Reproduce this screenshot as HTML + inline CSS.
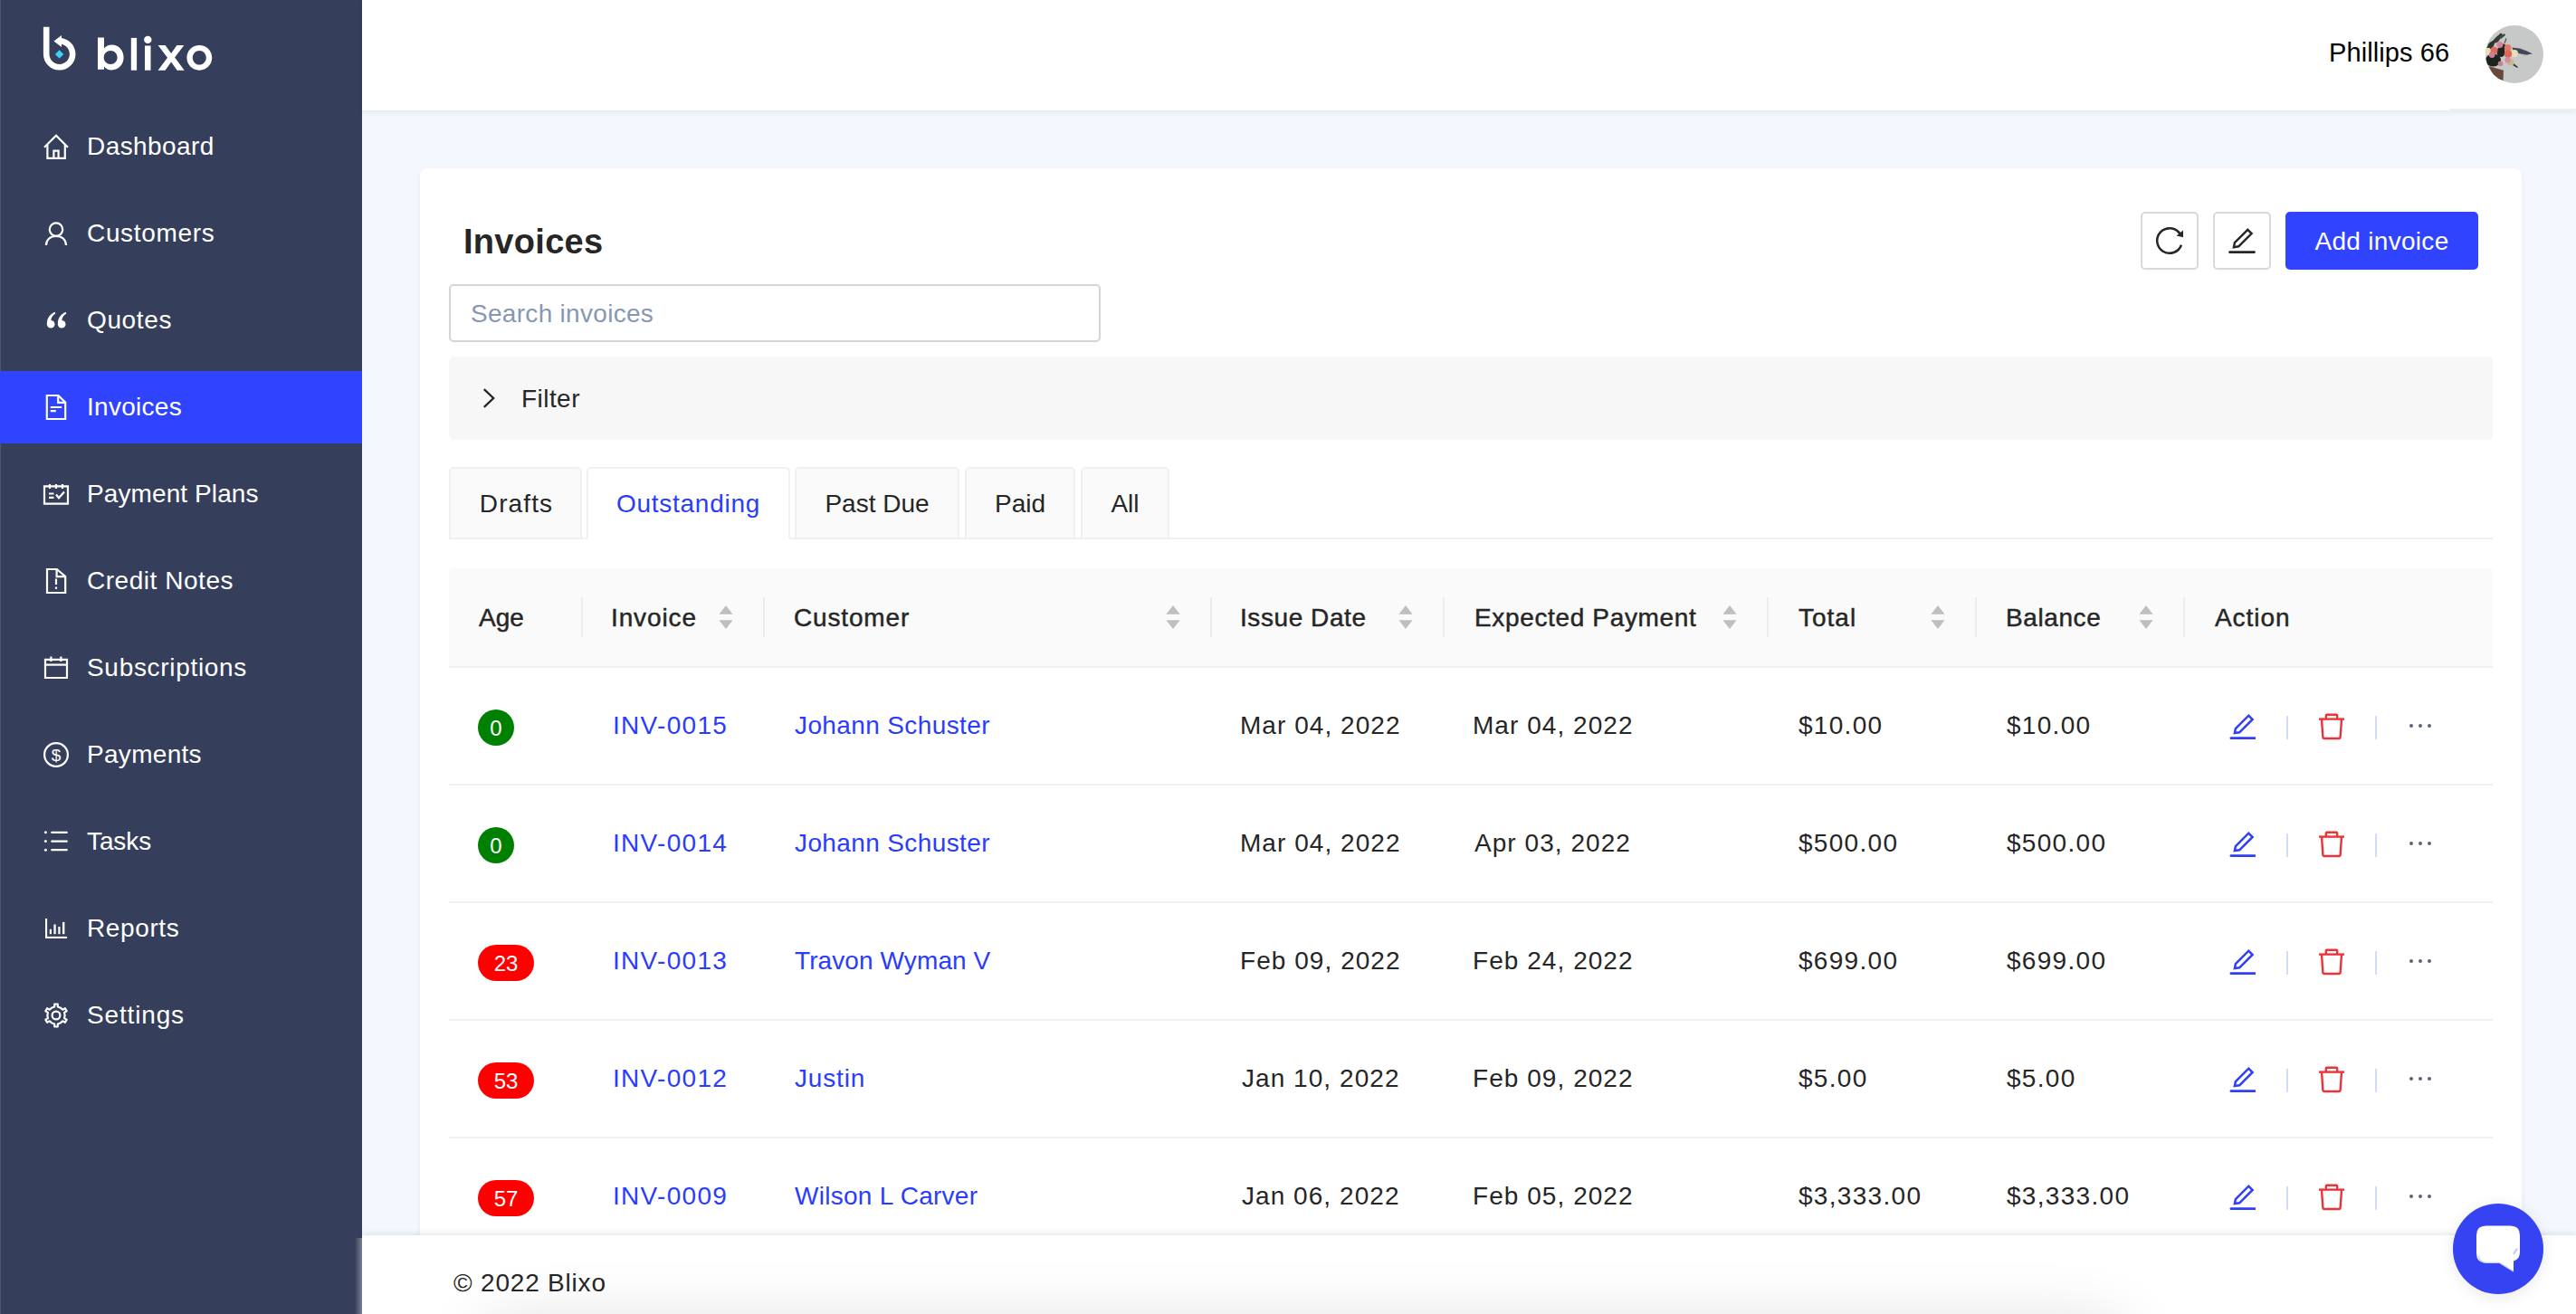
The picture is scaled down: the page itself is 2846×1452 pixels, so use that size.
<!DOCTYPE html>
<html><head><meta charset="utf-8">
<style>
*{box-sizing:border-box;margin:0;padding:0}
html,body{width:2846px;height:1452px;overflow:hidden}
body{background:#f4f7fe;font-family:"Liberation Sans",sans-serif;color:#262626;position:relative}
.abs{position:absolute}
#sb{left:0;top:0;width:400px;height:1452px;background:#353f5c}
#sb .edge{left:0;top:0;width:1px;height:1452px;background:#4d5773}
.nav{position:absolute;left:0;width:400px;height:80px;color:#fff;font-size:28px}
.nav.active{background:#3044ff}
.nav svg{position:absolute;left:48px;top:26px;width:28px;height:28px;overflow:visible}
.nav span{position:absolute;left:96px;letter-spacing:0.42px;top:0;line-height:80px;white-space:nowrap}
#hdr{left:400px;top:0;width:2446px;height:122px;background:#fff;box-shadow:0 2px 6px rgba(0,0,0,.07)}
#card{left:464px;top:186px;width:2322px;height:1300px;background:#fff;border-radius:8px;box-shadow:0 3px 6px rgba(30,40,90,.06)}
.t{position:absolute;white-space:nowrap;font-size:28px;line-height:1}

.btn{position:absolute;top:234px;height:64px;border:2px solid #d9d9d9;border-radius:5px;background:#fff;box-shadow:0 2px 0 rgba(0,0,0,.016)}
.btn svg{position:absolute;left:50%;top:50%;transform:translate(-50%,-50%)}
#add{left:2525px;width:213px;letter-spacing:0.3px;background:#3044ff;border-color:#3044ff;color:#fff;font-size:28px;text-align:center;line-height:62px}
#search{left:496px;top:314px;width:720px;height:64px;border:2px solid #d5d5d5;border-radius:5px;background:#fff}
#search span{position:absolute;left:22px;top:1px;line-height:59px;font-size:28px;color:#8797b3;white-space:nowrap;letter-spacing:0.3px}
#filter{left:496px;top:394px;width:2258px;height:92px;background:#f7f7f7;border-radius:5px}
.tab{position:absolute;top:516px;height:80px;background:#fafafa;border:2px solid #f0f0f0;border-radius:5px 5px 0 0;font-size:28px;text-align:center;line-height:78px;color:#262626}
.tab.on{background:#fff;border-bottom-color:#fff;color:#2a3cfd}
#tabline{left:496px;top:594px;width:2258px;height:2px;background:#f0f0f0}
#thead{left:496px;top:628px;width:2258px;height:110px;background:#fafafa;border-bottom:2px solid #f0f0f0;border-radius:5px 5px 0 0}
.th{position:absolute;top:0;line-height:110px;font-size:28px;font-weight:normal;color:#262626;white-space:nowrap;-webkit-text-stroke:0.45px #262626}
.sep{position:absolute;top:32px;width:2px;height:44px;background:#ececec}
.sort{position:absolute;top:41px;width:16px;height:26px}
.row{position:absolute;left:496px;width:2258px;height:130px;border-bottom:2px solid #f0f0f0;background:#fff}
.td{position:absolute;top:0px;line-height:128px;font-size:28px;white-space:nowrap;color:#262626}
.lnk{color:#2a3cfd}
.badge{position:absolute;top:46px;height:40px;border-radius:20px;color:#fff;font-size:24px;line-height:42px;text-align:center}
.vsep{position:absolute;top:53px;width:2px;height:26px;background:#d3dcf3}
#footer{left:400px;top:1365px;width:2446px;height:87px;background:#fff;box-shadow:0 -2px 6px rgba(0,0,0,.09);overflow:hidden}
#fshadow{left:140px;top:105px;width:1800px;height:60px;border-radius:30px;box-shadow:0 0 70px 10px rgba(0,0,0,.13);background:rgba(0,0,0,.13)}
#chat{left:2710px;top:1330px;width:100px;height:100px;border-radius:50%;background:#3543f2;box-shadow:0 3px 18px rgba(0,0,0,.09)}
.num{letter-spacing:1.3px}.dt{letter-spacing:1.05px}.nm{letter-spacing:0.38px}
</style></head>
<body>
<div id="sb" class="abs">
  <div class="edge abs"></div>
  <!-- logo -->
  <svg class="abs" style="left:0;top:0" width="260" height="100" viewBox="0 0 260 100">
    <g fill="#fff">
      <!-- icon -->
      <path d="M47.9 29.8h6.6v30c0 6.2 5 11.2 11.2 11.2s11.2-5 11.2-11.2-5-11.2-11.2-11.2h-1.5v-6.6h1.5c9.8 0 17.8 8 17.8 17.8s-8 17.8-17.8 17.8-17.8-8-17.8-17.8z"/>
      <path d="M59.5 45.5l8.5-6.5v13z"/>
      <!-- b -->
      <path d="M108 41.6h7v12c2-2.5 5-4 8.4-4 7.6 0 13.2 6.2 13.2 13.9s-5.6 13.9-13.2 13.9c-3.4 0-6.4-1.5-8.4-4v3.3h-7zM122.2 56c-4.2 0-7.5 3.4-7.5 7.5s3.3 7.5 7.5 7.5 7.4-3.4 7.4-7.5-3.2-7.5-7.4-7.5z"/>
      <rect x="144.8" y="41.9" width="6.3" height="35.8"/>
      <rect x="160" y="50.5" width="6.5" height="27.2"/>
      <circle cx="163.3" cy="43.9" r="4.2"/>
      <path d="M174.6 50h8l6.5 9 6.3-9h7.9l-10.2 13.6 10.6 14.1h-8l-6.6-9.2-6.6 9.2h-8l10.5-14z"/>
      <path d="M220.3 49.9c7.8 0 13.9 6.2 13.9 13.9s-6.1 13.9-13.9 13.9-13.9-6.2-13.9-13.9 6.1-13.9 13.9-13.9zm0 6.1c-4.2 0-7.5 3.5-7.5 7.8s3.3 7.8 7.5 7.8 7.5-3.5 7.5-7.8-3.3-7.8-7.5-7.8z"/>
    </g>
    <path d="M65.6 55.2l4.7 4.7-4.7 4.7-4.7-4.7z" fill="#3bd3f7"/>
  </svg>
  <div class="nav" style="top:122px"><svg viewBox="0 0 28 28" width="28" height="28"><g fill="none" stroke="#fff" stroke-width="2.2" stroke-linejoin="miter"><path d="M1 14.8 L14 1.8 L27 14.8"/><path d="M4.4 12 V26.8 H23.8 V12"/><path d="M11.4 26.8 V18.6 H16.6 V26.8"/></g></svg><span style="letter-spacing:0.42px">Dashboard</span></div>
  <div class="nav" style="top:218px"><svg viewBox="0 0 28 28" width="28" height="28"><g fill="none" stroke="#fff" stroke-width="2.2"><circle cx="14" cy="9.6" r="7.2"/><path d="M3 27 C3 20.5 8 16.8 14 16.8 C20 16.8 25 20.5 25 27"/></g></svg><span style="letter-spacing:0.66px">Customers</span></div>
  <div class="nav" style="top:314px"><svg viewBox="0 0 28 28" width="28" height="28"><g fill="#fff"><circle cx="8.2" cy="18.2" r="4.3"/><path d="M3.9 18.2 C3.6 12 7 7.2 12.6 4.8 L13.3 6.4 C9.8 8.6 8.2 11.6 8.4 14.4 Z"/><circle cx="20.2" cy="18.2" r="4.3"/><path d="M15.9 18.2 C15.6 12 19 7.2 24.6 4.8 L25.3 6.4 C21.8 8.6 20.2 11.6 20.4 14.4 Z"/></g></svg><span style="letter-spacing:0.62px">Quotes</span></div>
  <div class="nav active" style="top:410px"><svg viewBox="0 0 28 28" width="28" height="28"><g fill="none" stroke="#fff" stroke-width="2.2"><path d="M3.8 1 H16.5 L24.2 8.7 V27 H3.8 Z"/><path d="M16.2 1 V8.9 H24.2"/><path d="M7.8 14 H20.2 M7.8 18.2 H13.8"/></g></svg><span style="letter-spacing:0.28px">Invoices</span></div>
  <div class="nav" style="top:506px"><svg viewBox="0 0 28 28" width="28" height="28"><g fill="none" stroke="#fff" stroke-width="2.2"><path d="M1 5.4 H27 V24.6 H1 Z"/><path d="M7 3 V8 M14 3 V8 M21 3 V8"/><path d="M6 13.5 H11.5 M6 17.8 H11.5"/><path d="M14 14.5 L17 18.2 L23 11.5"/></g></svg><span style="letter-spacing:0.1px">Payment Plans</span></div>
  <div class="nav" style="top:602px"><svg viewBox="0 0 28 28" width="28" height="28"><g fill="none" stroke="#fff" stroke-width="2.2"><path d="M4 1 H14.8 L24.2 9 V27 H4 Z"/><path d="M14.6 1 V9.2 H24.2"/><path d="M14 11.5 V18"/></g><rect x="12.9" y="20.5" width="2.2" height="2.4" fill="#fff"/></svg><span style="letter-spacing:0.54px">Credit Notes</span></div>
  <div class="nav" style="top:698px"><svg viewBox="0 0 28 28" width="28" height="28"><g fill="none" stroke="#fff" stroke-width="2.2"><path d="M2 4.8 H26 V25 H2 Z"/><path d="M8.4 1.5 V7 M19.4 1.5 V7"/><path d="M2 10.6 H26"/></g></svg><span style="letter-spacing:0.69px">Subscriptions</span></div>
  <div class="nav" style="top:794px"><svg viewBox="0 0 28 28" width="28" height="28"><g fill="none" stroke="#fff" stroke-width="2.2"><circle cx="14" cy="14" r="12.9"/></g><text x="14" y="21" text-anchor="middle" font-family="Liberation Sans" font-size="19" fill="#fff">$</text></svg><span style="letter-spacing:0.3px">Payments</span></div>
  <div class="nav" style="top:890px"><svg viewBox="0 0 28 28" width="28" height="28"><g fill="#fff"><circle cx="2.4" cy="3.8" r="1.5"/><circle cx="2.4" cy="13.6" r="1.5"/><circle cx="2.4" cy="23.2" r="1.5"/></g><g fill="none" stroke="#fff" stroke-width="2.2"><path d="M8.4 3.8 H26.6 M8.4 13.6 H26.6 M8.4 23.2 H26.6"/></g></svg><span style="letter-spacing:-0.1px">Tasks</span></div>
  <div class="nav" style="top:986px"><svg viewBox="0 0 28 28" width="28" height="28"><g fill="#fff"><rect x="2" y="3" width="2.1" height="22"/><rect x="2" y="22.9" width="24" height="2.1"/><rect x="6.8" y="14.8" width="2.2" height="5.4"/><rect x="11.4" y="9.5" width="2.3" height="10.7"/><rect x="16.3" y="12" width="2.2" height="8.2"/><rect x="21" y="6.9" width="2.4" height="13.3"/></g></svg><span style="letter-spacing:0.62px">Reports</span></div>
  <div class="nav" style="top:1082px"><svg viewBox="0 0 28 28" width="28" height="28"><g fill="none" stroke="#fff" stroke-width="2.2" stroke-linejoin="round"><path d="M9.49 5.52 L12.17 4.58 L12.25 1.52 L15.75 1.52 L15.83 4.58 L18.51 5.52 L19.09 5.86 L21.25 7.70 L23.93 6.24 L25.68 9.28 L23.08 10.87 L23.59 13.66 L23.59 14.34 L23.08 17.13 L25.68 18.72 L23.93 21.76 L21.25 20.30 L19.09 22.14 L18.51 22.48 L15.83 23.42 L15.75 26.48 L12.25 26.48 L12.17 23.42 L9.49 22.48 L8.91 22.14 L6.75 20.30 L4.07 21.76 L2.32 18.72 L4.92 17.13 L4.41 14.34 L4.41 13.66 L4.92 10.87 L2.32 9.28 L4.07 6.24 L6.75 7.70 L8.91 5.86Z"/><circle cx="14" cy="14" r="4.4"/></g></svg><span style="letter-spacing:0.85px">Settings</span></div>
</div>

<div id="hdr" class="abs">
  <div class="abs" style="left:2306px;top:120px;width:140px;height:2px;background:#efefef"></div>
  <div class="t" style="left:2173px;top:44px;font-size:29px;color:#000;letter-spacing:0.1px">Phillips 66</div>
  <svg class="abs" style="left:2346px;top:28px" width="64" height="64" viewBox="0 0 64 64">
    <defs><clipPath id="avc"><circle cx="32" cy="32" r="32"/></clipPath>
    <filter id="avb"><feGaussianBlur stdDeviation="0.6"/></filter></defs>
    <g clip-path="url(#avc)">
      <rect width="64" height="64" fill="#c7c8c8"/>
      <g filter="url(#avb)">
      <path d="M1 25 L6 19 L12 13 L17 8.5 L19 10 L14 15 L9 21 L4 27 Z" fill="#2f332f"/><ellipse cx="6" cy="22" rx="3" ry="5" transform="rotate(35 6 22)" fill="#30342f"/><ellipse cx="13" cy="15.5" rx="2.5" ry="4.5" transform="rotate(40 13 15.5)" fill="#363a35"/><ellipse cx="20" cy="24" rx="2.4" ry="3.6" fill="#262a26"/>
      <path d="M15 13 L21 9 L22 11 L17 15 Z" fill="#3b4a3a"/>
      <path d="M22.5 14 L23.5 15 L21.5 20 L20.5 19.5 Z" fill="#444a48"/>
      <ellipse cx="8.5" cy="38.5" rx="8.5" ry="7" fill="#1d211f"/>
      <ellipse cx="17" cy="29.5" rx="4.5" ry="5.5" fill="#202421"/>
      <path d="M29.5 24.5 L38 25.5 L46 28.5 L52 31.5 L45 32.5 L37 31 L31 29 Z" fill="#454a50"/>
      <circle cx="40" cy="30" r="1.6" fill="#34407a"/>
      <circle cx="46" cy="31.2" r="1.3" fill="#3a4585"/>
      <circle cx="43" cy="33" r="1" fill="#b9ab6a"/>
      <path d="M31 42 L36 46 L35 47 L30 44 Z" fill="#3a3e3a"/>
      <path d="M3.5 45 L20 49.8 L19.5 61 L10 58 Z" fill="#6b4a3b"/>
      <circle cx="28" cy="41" r="3.6" fill="#c6bb86"/>
      <circle cx="32" cy="31" r="4" fill="#eadcbc"/>
      <circle cx="2.6" cy="29" r="4.2" fill="#e8dcb6"/>
      <circle cx="9.5" cy="27.8" r="4" fill="#de6a5c"/>
      <circle cx="24.6" cy="24.8" r="3.8" fill="#e47a6a"/>
      <circle cx="25" cy="31.5" r="4.3" fill="#e0665a"/>
      <circle cx="15.9" cy="21.4" r="3.4" fill="#d9819c"/>
      <circle cx="7.2" cy="32.6" r="3.4" fill="#cf7d96"/>
      <circle cx="24.6" cy="38.2" r="3.2" fill="#d88aa0"/>
      <circle cx="16.5" cy="42.2" r="2.8" fill="#c97c94"/>
      </g>
    </g>
  </svg>
</div>
<div id="card" class="abs"></div>
<div class="t" style="left:512px;top:248px;font-size:38px;font-weight:bold;color:#262626;letter-spacing:0.3px">Invoices</div>
<div class="btn" style="left:2365px;width:64px"><svg width="32" height="32" viewBox="0 0 32 32"><path d="M28.97 20.72 A13.8 13.8 0 1 1 27.44 8.28" fill="none" stroke="#262626" stroke-width="2.5"/><path d="M31 4.4 L31 12.2 L23.6 10.6 Z" fill="#262626"/></svg></div>
<div class="btn" style="left:2445px;width:64px"><svg width="30" height="30" viewBox="0 0 30 30"><path d="M5.9 22.2 L6.9 17.1 L21.3 2.8 L25.6 7.1 L11.2 21.3 Z" fill="none" stroke="#262626" stroke-width="2.4" stroke-linejoin="miter"/><path d="M1.4 27.6 H28.6" stroke="#262626" stroke-width="2.6" stroke-linecap="round"/></svg></div>
<div class="btn" id="add">Add invoice</div>
<div id="search" class="abs"><span>Search invoices</span></div>
<div id="filter" class="abs">
  <svg class="abs" style="left:37px;top:35px" width="16" height="22" viewBox="0 0 16 22"><path d="M1.8 1.2 L12.2 11 L1.8 20.8" fill="none" stroke="#262626" stroke-width="2.3"/></svg>
  <div class="t" style="left:80px;top:33px;color:#262626;letter-spacing:0.45px">Filter</div>
</div>
<div id="tabline" class="abs"></div>
<div class="tab" style="left:496px;width:147px;letter-spacing:1.1px;text-indent:2px">Drafts</div>
<div class="tab on" style="left:648px;width:225px;letter-spacing:0.75px">Outstanding</div>
<div class="tab" style="left:878px;width:182px">Past Due</div>
<div class="tab" style="left:1066px;width:122px">Paid</div>
<div class="tab" style="left:1194px;width:98px">All</div>
<div id="thead" class="abs">
  <div class="th" style="left:33px;letter-spacing:0px">Age</div>
  <div class="th" style="left:179px;letter-spacing:0.88px">Invoice</div>
  <svg class="sort" style="left:298px" viewBox="0 0 16 26"><path d="M8 0 L15.6 9.8 H0.4 Z M0.4 16.2 H15.6 L8 26 Z" fill="#bfbfbf"/></svg>
  <div class="sep" style="left:146px"></div>
  <div class="th" style="left:381px;letter-spacing:0.84px">Customer</div>
  <svg class="sort" style="left:792px" viewBox="0 0 16 26"><path d="M8 0 L15.6 9.8 H0.4 Z M0.4 16.2 H15.6 L8 26 Z" fill="#bfbfbf"/></svg>
  <div class="sep" style="left:347px"></div>
  <div class="th" style="left:874px;letter-spacing:0.57px">Issue Date</div>
  <svg class="sort" style="left:1049px" viewBox="0 0 16 26"><path d="M8 0 L15.6 9.8 H0.4 Z M0.4 16.2 H15.6 L8 26 Z" fill="#bfbfbf"/></svg>
  <div class="sep" style="left:841px"></div>
  <div class="th" style="left:1133px;letter-spacing:0.65px">Expected Payment</div>
  <svg class="sort" style="left:1407px" viewBox="0 0 16 26"><path d="M8 0 L15.6 9.8 H0.4 Z M0.4 16.2 H15.6 L8 26 Z" fill="#bfbfbf"/></svg>
  <div class="sep" style="left:1098px"></div>
  <div class="th" style="left:1491px;letter-spacing:1.0px">Total</div>
  <svg class="sort" style="left:1637px" viewBox="0 0 16 26"><path d="M8 0 L15.6 9.8 H0.4 Z M0.4 16.2 H15.6 L8 26 Z" fill="#bfbfbf"/></svg>
  <div class="sep" style="left:1456px"></div>
  <div class="th" style="left:1720px;letter-spacing:0.6px">Balance</div>
  <svg class="sort" style="left:1867px" viewBox="0 0 16 26"><path d="M8 0 L15.6 9.8 H0.4 Z M0.4 16.2 H15.6 L8 26 Z" fill="#bfbfbf"/></svg>
  <div class="sep" style="left:1686px"></div>
  <div class="th" style="left:1951px;letter-spacing:0.94px">Action</div>
  <div class="sep" style="left:1916px"></div>
</div>
<div class="row" style="top:738px">
  <div class="badge" style="left:32px;width:40px;background:#008000">0</div>
  <div class="td lnk num" style="left:181px">INV-0015</div>
  <div class="td lnk nm" style="left:382px">Johann Schuster</div>
  <div class="td num dt" style="left:874px">Mar 04, 2022</div>
  <div class="td num dt" style="left:1131px">Mar 04, 2022</div>
  <div class="td num" style="left:1491px">$10.00</div>
  <div class="td num" style="left:1721px">$10.00</div>
  <svg class="abs" style="left:1966px;top:50px" width="30" height="30" viewBox="0 0 30 30"><path d="M6.9 22.1 L7.9 17.1 L22.3 2.7 L26.6 7 L12.2 21.3 Z" fill="none" stroke="#2f3ff6" stroke-width="2.5"/><path d="M2.9 27.7 H29.1" stroke="#2f3ff6" stroke-width="2.8" stroke-linecap="round"/></svg>
  <div class="vsep" style="left:2030px"></div>
  <svg class="abs" style="left:2065px;top:50px" width="30" height="30" viewBox="0 0 30 30"><path d="M1 6.6 H29" stroke="#ee3338" stroke-width="2.4"/><path d="M8.8 6.6 V2.8 Q8.8 1.8 9.8 1.8 H20.2 Q21.2 1.8 21.2 2.8 V6.6" fill="none" stroke="#ee3338" stroke-width="2.4"/><path d="M4 6.6 L5.4 27 Q5.5 28 6.5 28 H23.5 Q24.5 28 24.6 27 L26 6.6" fill="none" stroke="#ee3338" stroke-width="2.4"/></svg>
  <div class="vsep" style="left:2128px"></div>
  <svg class="abs" style="left:2166px;top:61px" width="24" height="6" viewBox="0 0 24 6"><g fill="#5b6479"><circle cx="2" cy="3" r="2"/><circle cx="12" cy="3" r="2"/><circle cx="22" cy="3" r="2"/></g></svg>
</div>
<div class="row" style="top:868px">
  <div class="badge" style="left:32px;width:40px;background:#008000">0</div>
  <div class="td lnk num" style="left:181px">INV-0014</div>
  <div class="td lnk nm" style="left:382px">Johann Schuster</div>
  <div class="td num dt" style="left:874px">Mar 04, 2022</div>
  <div class="td num dt" style="left:1133px">Apr 03, 2022</div>
  <div class="td num" style="left:1491px">$500.00</div>
  <div class="td num" style="left:1721px">$500.00</div>
  <svg class="abs" style="left:1966px;top:50px" width="30" height="30" viewBox="0 0 30 30"><path d="M6.9 22.1 L7.9 17.1 L22.3 2.7 L26.6 7 L12.2 21.3 Z" fill="none" stroke="#2f3ff6" stroke-width="2.5"/><path d="M2.9 27.7 H29.1" stroke="#2f3ff6" stroke-width="2.8" stroke-linecap="round"/></svg>
  <div class="vsep" style="left:2030px"></div>
  <svg class="abs" style="left:2065px;top:50px" width="30" height="30" viewBox="0 0 30 30"><path d="M1 6.6 H29" stroke="#ee3338" stroke-width="2.4"/><path d="M8.8 6.6 V2.8 Q8.8 1.8 9.8 1.8 H20.2 Q21.2 1.8 21.2 2.8 V6.6" fill="none" stroke="#ee3338" stroke-width="2.4"/><path d="M4 6.6 L5.4 27 Q5.5 28 6.5 28 H23.5 Q24.5 28 24.6 27 L26 6.6" fill="none" stroke="#ee3338" stroke-width="2.4"/></svg>
  <div class="vsep" style="left:2128px"></div>
  <svg class="abs" style="left:2166px;top:61px" width="24" height="6" viewBox="0 0 24 6"><g fill="#5b6479"><circle cx="2" cy="3" r="2"/><circle cx="12" cy="3" r="2"/><circle cx="22" cy="3" r="2"/></g></svg>
</div>
<div class="row" style="top:998px">
  <div class="badge" style="left:32px;width:62px;background:#ff0000">23</div>
  <div class="td lnk num" style="left:181px">INV-0013</div>
  <div class="td lnk nm" style="left:382px;letter-spacing:0.1px">Travon Wyman V</div>
  <div class="td num dt" style="left:874px">Feb 09, 2022</div>
  <div class="td num dt" style="left:1131px">Feb 24, 2022</div>
  <div class="td num" style="left:1491px">$699.00</div>
  <div class="td num" style="left:1721px">$699.00</div>
  <svg class="abs" style="left:1966px;top:50px" width="30" height="30" viewBox="0 0 30 30"><path d="M6.9 22.1 L7.9 17.1 L22.3 2.7 L26.6 7 L12.2 21.3 Z" fill="none" stroke="#2f3ff6" stroke-width="2.5"/><path d="M2.9 27.7 H29.1" stroke="#2f3ff6" stroke-width="2.8" stroke-linecap="round"/></svg>
  <div class="vsep" style="left:2030px"></div>
  <svg class="abs" style="left:2065px;top:50px" width="30" height="30" viewBox="0 0 30 30"><path d="M1 6.6 H29" stroke="#ee3338" stroke-width="2.4"/><path d="M8.8 6.6 V2.8 Q8.8 1.8 9.8 1.8 H20.2 Q21.2 1.8 21.2 2.8 V6.6" fill="none" stroke="#ee3338" stroke-width="2.4"/><path d="M4 6.6 L5.4 27 Q5.5 28 6.5 28 H23.5 Q24.5 28 24.6 27 L26 6.6" fill="none" stroke="#ee3338" stroke-width="2.4"/></svg>
  <div class="vsep" style="left:2128px"></div>
  <svg class="abs" style="left:2166px;top:61px" width="24" height="6" viewBox="0 0 24 6"><g fill="#5b6479"><circle cx="2" cy="3" r="2"/><circle cx="12" cy="3" r="2"/><circle cx="22" cy="3" r="2"/></g></svg>
</div>
<div class="row" style="top:1128px">
  <div class="badge" style="left:32px;width:62px;background:#ff0000">53</div>
  <div class="td lnk num" style="left:181px">INV-0012</div>
  <div class="td lnk nm" style="left:382px;letter-spacing:0.85px">Justin</div>
  <div class="td num dt" style="left:876px">Jan 10, 2022</div>
  <div class="td num dt" style="left:1131px">Feb 09, 2022</div>
  <div class="td num" style="left:1491px">$5.00</div>
  <div class="td num" style="left:1721px">$5.00</div>
  <svg class="abs" style="left:1966px;top:50px" width="30" height="30" viewBox="0 0 30 30"><path d="M6.9 22.1 L7.9 17.1 L22.3 2.7 L26.6 7 L12.2 21.3 Z" fill="none" stroke="#2f3ff6" stroke-width="2.5"/><path d="M2.9 27.7 H29.1" stroke="#2f3ff6" stroke-width="2.8" stroke-linecap="round"/></svg>
  <div class="vsep" style="left:2030px"></div>
  <svg class="abs" style="left:2065px;top:50px" width="30" height="30" viewBox="0 0 30 30"><path d="M1 6.6 H29" stroke="#ee3338" stroke-width="2.4"/><path d="M8.8 6.6 V2.8 Q8.8 1.8 9.8 1.8 H20.2 Q21.2 1.8 21.2 2.8 V6.6" fill="none" stroke="#ee3338" stroke-width="2.4"/><path d="M4 6.6 L5.4 27 Q5.5 28 6.5 28 H23.5 Q24.5 28 24.6 27 L26 6.6" fill="none" stroke="#ee3338" stroke-width="2.4"/></svg>
  <div class="vsep" style="left:2128px"></div>
  <svg class="abs" style="left:2166px;top:61px" width="24" height="6" viewBox="0 0 24 6"><g fill="#5b6479"><circle cx="2" cy="3" r="2"/><circle cx="12" cy="3" r="2"/><circle cx="22" cy="3" r="2"/></g></svg>
</div>
<div class="row" style="top:1258px">
  <div class="badge" style="left:32px;width:62px;background:#ff0000">57</div>
  <div class="td lnk num" style="left:181px">INV-0009</div>
  <div class="td lnk nm" style="left:382px;letter-spacing:0.28px">Wilson L Carver</div>
  <div class="td num dt" style="left:876px">Jan 06, 2022</div>
  <div class="td num dt" style="left:1131px">Feb 05, 2022</div>
  <div class="td num" style="left:1491px">$3,333.00</div>
  <div class="td num" style="left:1721px">$3,333.00</div>
  <svg class="abs" style="left:1966px;top:50px" width="30" height="30" viewBox="0 0 30 30"><path d="M6.9 22.1 L7.9 17.1 L22.3 2.7 L26.6 7 L12.2 21.3 Z" fill="none" stroke="#2f3ff6" stroke-width="2.5"/><path d="M2.9 27.7 H29.1" stroke="#2f3ff6" stroke-width="2.8" stroke-linecap="round"/></svg>
  <div class="vsep" style="left:2030px"></div>
  <svg class="abs" style="left:2065px;top:50px" width="30" height="30" viewBox="0 0 30 30"><path d="M1 6.6 H29" stroke="#ee3338" stroke-width="2.4"/><path d="M8.8 6.6 V2.8 Q8.8 1.8 9.8 1.8 H20.2 Q21.2 1.8 21.2 2.8 V6.6" fill="none" stroke="#ee3338" stroke-width="2.4"/><path d="M4 6.6 L5.4 27 Q5.5 28 6.5 28 H23.5 Q24.5 28 24.6 27 L26 6.6" fill="none" stroke="#ee3338" stroke-width="2.4"/></svg>
  <div class="vsep" style="left:2128px"></div>
  <svg class="abs" style="left:2166px;top:61px" width="24" height="6" viewBox="0 0 24 6"><g fill="#5b6479"><circle cx="2" cy="3" r="2"/><circle cx="12" cy="3" r="2"/><circle cx="22" cy="3" r="2"/></g></svg>
</div>
<div id="footer" class="abs"><div id="fshadow" class="abs"></div><div class="t" style="left:101px;top:39px;color:#262626;letter-spacing:0.8px">&copy; 2022 Blixo</div></div>
<div class="abs" style="left:392px;top:1368px;width:8px;height:84px;background:linear-gradient(to right,rgba(255,255,255,0),rgba(255,255,255,.35))"></div>
<div id="chat" class="abs"><svg class="abs" style="left:24px;top:22px" width="52" height="56" viewBox="0 0 52 56"><path d="M12.5 2.6 H39.5 Q50 2.6 50 13 V31.5 Q50 39.5 43 41.5 V53 L27.5 43.4 H12.5 Q2 43.4 2 33 V13 Q2 2.6 12.5 2.6 Z" fill="#fff"/><path d="M4 36 Q6 43 13 43.4 H27.5 L43 53" fill="none" stroke="#c9ccfb" stroke-width="1.2"/><path d="M46.5 28.5 L43.5 33" stroke="#c3c7fa" stroke-width="2.2" stroke-linecap="round"/></svg></div>
</body></html>
